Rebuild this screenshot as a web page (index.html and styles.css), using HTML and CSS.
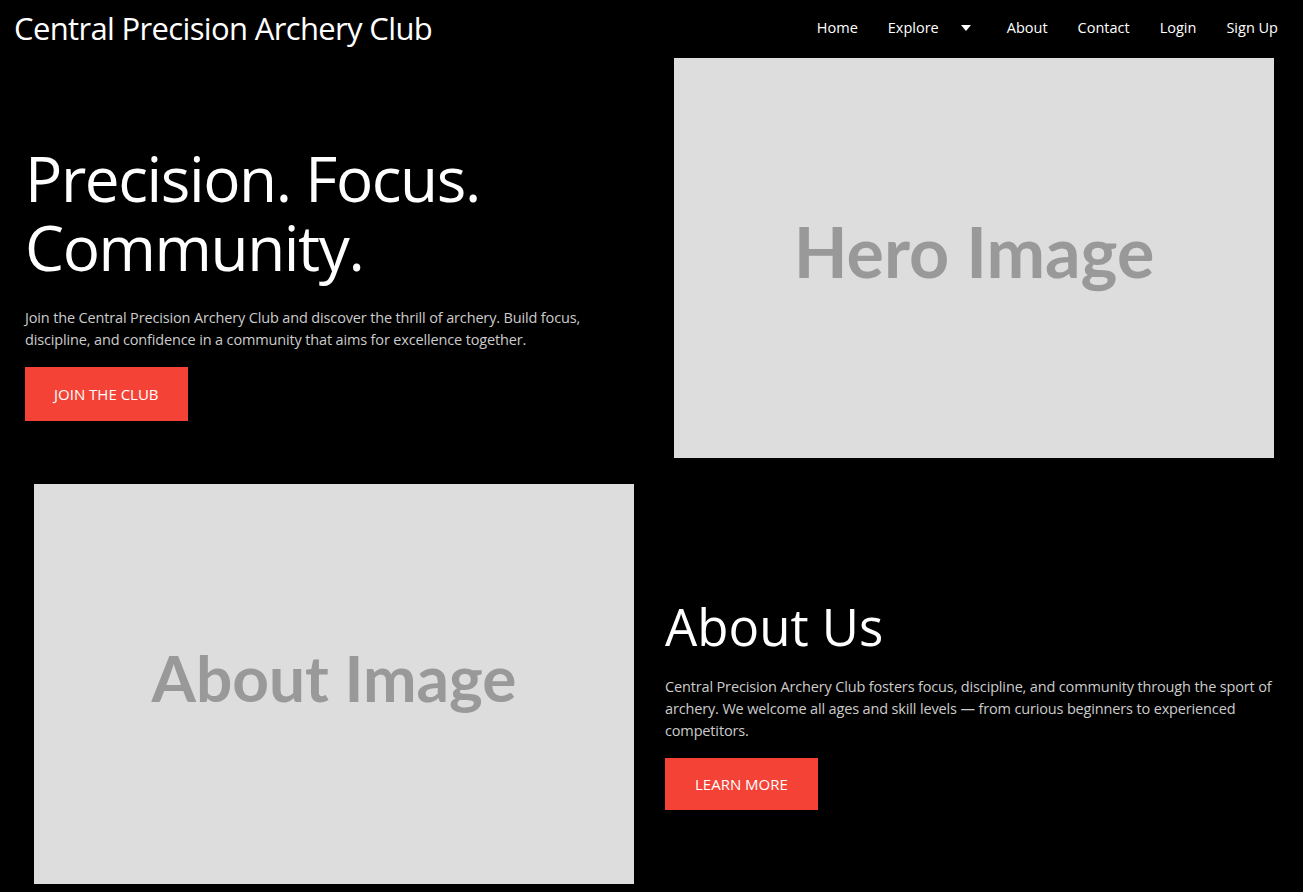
FILE: index.html
```html
<!DOCTYPE html>
<html lang="en">
<head>
    <meta charset="UTF-8">
    <meta name="viewport" content="width=device-width, initial-scale=1.0">
    <title>Central Precision Archery Club</title>
    <link rel="stylesheet" href="styles.css">
</head>
<body>
    <header class="navbar">
        <a href="#" class="brand">Central Precision Archery Club</a>
        <ul class="nav-links">
            <li><a href="#">Home</a></li>
            <li class="dropdown">
                <a href="#">Explore</a>
                <button class="caret-btn" aria-label="Open Explore menu">
                    <svg width="10" height="6" viewBox="0 0 10 6"><path d="M0 0h10L5 6z" fill="#fff"/></svg>
                </button>
            </li>
            <li><a href="#">About</a></li>
            <li><a href="#">Contact</a></li>
            <li><a href="#">Login</a></li>
            <li><a href="#">Sign Up</a></li>
        </ul>
    </header>

    <section class="hero">
        <div class="hero-text">
            <h1>Precision. Focus. Community.</h1>
            <p>Join the Central Precision Archery Club and discover the thrill of archery. Build focus, discipline, and confidence in a community that aims for excellence together.</p>
            <a href="#" class="btn">Join the Club</a>
        </div>
        <div class="placeholder hero-img">Hero Image</div>
    </section>

    <section class="about">
        <div class="placeholder about-img">About Image</div>
        <div class="about-text">
            <h2>About Us</h2>
            <p>Central Precision Archery Club fosters focus, discipline, and community through the sport of archery. We welcome all ages and skill levels — from curious beginners to experienced competitors.</p>
            <a href="#" class="btn">Learn More</a>
        </div>
    </section>
</body>
</html>
```

FILE: styles.css
```css
body {
    margin: 0;
    background: #000;
    color: #fff;
    font-family: "Segoe UI", "Open Sans", sans-serif;
}
a {
    color: inherit;
    text-decoration: none;
}

/* top bar */
.navbar {
    display: flex;
    justify-content: space-between;
    align-items: center;
    height: 51px;
    padding: 2px 10px 2px 14px;
}
.brand {
    font-size: 31px;
    letter-spacing: -0.65px;
}
.nav-links {
    display: flex;
    align-items: center;
    list-style: none;
    margin: 0;
    padding: 0;
}
.nav-links a {
    display: block;
    padding: 0 15px;
    font-size: 14.5px;
}
.dropdown {
    display: flex;
    align-items: center;
}
.caret-btn {
    background: none;
    border: none;
    padding: 0 21px 0 7px;
    cursor: pointer;
    display: flex;
}

/* hero */
.hero {
    display: flex;
    align-items: center;
    justify-content: space-between;
    padding: 3px 29px 0 25px;
}
.hero-text {
    width: 620px;
    padding-top: 49px;
}
.hero h1 {
    font-size: 62px;
    font-weight: 400;
    letter-spacing: -1.4px;
    line-height: 69px;
    margin: 0 0 25px;
}
.hero p,
.about p {
    color: #ccc;
    font-size: 14.5px;
    letter-spacing: -0.15px;
    line-height: 22px;
    margin: 0 0 16px;
}
.btn {
    display: inline-block;
    background: #f44336;
    color: #fff;
    text-transform: uppercase;
    font-size: 15px;
    padding: 17px 29px;
}
.about .btn {
    padding: 16px 30px;
}

/* grey image stand-ins */
.placeholder {
    flex: none;
    box-sizing: border-box;
    width: 600px;
    height: 400px;
    padding-bottom: 14px;
    background: #ddd;
    color: #999;
    display: flex;
    align-items: center;
    justify-content: center;
    font-family: Lato, sans-serif;
    font-weight: 700;
    font-size: 70px;
}
.about-img {
    font-size: 64px;
}

/* about */
.about {
    display: flex;
    align-items: center;
    gap: 31px;
    padding: 26px 20px 0 34px;
}
.about-text {
    flex: 1;
    padding-top: 40px;
}
.about h2 {
    font-size: 51px;
    font-weight: 400;
    line-height: 1.1;
    margin: 0 0 22px;
}
```
